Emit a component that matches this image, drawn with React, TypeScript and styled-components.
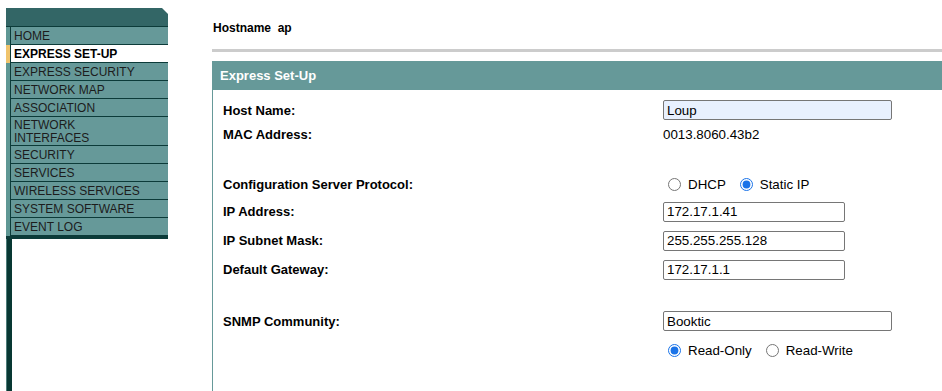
import React from 'react';
import styled, { createGlobalStyle, css } from 'styled-components';

const GlobalStyle = createGlobalStyle`
    html, body, #root {
        height: 100%;
        margin: 0;
    }
    body {
        font-family: 'Liberation Sans', Arial, sans-serif;
        background: #ffffff;
        color: #000000;
    }
`;

const Page = styled.div`
    display: flex;
    flex-direction: row;
    align-items: stretch;
    min-height: 100%;
    padding: 8px 0 0 6px;
    box-sizing: border-box;
    gap: 44px;
`;

const Sidebar = styled.nav`
    display: flex;
    flex-direction: column;
    width: 162px;
    flex-shrink: 0;
`;

const SidebarHead = styled.div`
    height: 18px;
    background-color: #336666;
    border-bottom: 1px solid #0c3b39;
    clip-path: polygon(0 0, calc(100% - 6px) 0, 100% 6px, 100% 100%, 0 100%);
`;

const MenuList = styled.ul`
    list-style: none;
    margin: 0;
    padding: 0;
`;

const MenuItem = styled.li<{ $active?: boolean }>`
    display: flex;
    flex-direction: row;
    background-color: #669999;
    &::before {
        content: '';
        width: 4px;
        flex-shrink: 0;
        background-color: ${({ $active }) => ($active ? '#f0c46c' : '#5f9794')};
        border-right: 1px solid #0c3b39;
    }
`;

const MenuLabel = styled.span<{ $active?: boolean; $tall?: boolean }>`
    flex: 1;
    display: flex;
    align-items: center;
    height: ${({ $tall }) => ($tall ? '27px' : '16px')};
    padding: 1px 0 0 3px;
    border-bottom: 1px solid #0c3b39;
    font-size: 12px;
    line-height: 13px;
    color: #1c1c1c;
    text-transform: uppercase;
    white-space: nowrap;
    ${({ $active }) =>
        $active &&
        css`
            background-color: #ffffff;
            color: #000000;
            font-weight: bold;
        `}
`;

const SidebarFoot = styled.div`
    height: 3px;
    background-color: #0c3b39;
`;

const SidebarTail = styled.div`
    flex: 1;
    width: 6px;
    background-color: #083833;
    border-left: 1px solid #4e7d7a;
    box-sizing: border-box;
`;

const Main = styled.main`
    flex: 1;
    display: flex;
    flex-direction: column;
    min-width: 0;
`;

const HostLine = styled.div`
    height: 40px;
    display: flex;
    align-items: center;
    padding: 0 0 0 1px;
    font-size: 12px;
    font-weight: bold;
    white-space: pre;
`;

const Rule = styled.hr`
    margin: 1px 0 9px;
    height: 3px;
    border: none;
    background-color: #cccccc;
`;

const PanelHeader = styled.div`
    height: 29px;
    display: flex;
    align-items: center;
    padding-left: 8px;
    background-color: #669999;
    color: #ffffff;
    font-size: 13px;
    font-weight: bold;
`;

const PanelBody = styled.div`
    flex: 1;
    border-left: 1px solid #669999;
    padding: 8px 0 0 10px;
    display: flex;
    flex-direction: column;
`;

const FormRow = styled.div<{ $h: number }>`
    display: grid;
    grid-template-columns: 440px 1fr;
    align-items: center;
    height: ${({ $h }) => $h}px;
`;

const Spacer = styled.div<{ $h: number }>`
    height: ${({ $h }) => $h}px;
`;

const Label = styled.span`
    font-size: 13px;
    font-weight: bold;
`;

const Value = styled.span`
    font-size: 13.33px;
`;

const TextInput = styled.input<{ $wide?: boolean; $filled?: boolean }>`
    box-sizing: border-box;
    width: ${({ $wide }) => ($wide ? '229px' : '182px')};
    height: 20px;
    padding: 0 3px;
    border: 1px solid #767676;
    border-radius: 2px;
    background-color: ${({ $filled }) => ($filled ? '#e8f0fe' : '#ffffff')};
    font-family: 'Liberation Sans', Arial, sans-serif;
    font-size: 13.33px;
    color: #000000;
    outline: none;
`;

const RadioGroup = styled.div`
    display: flex;
    flex-direction: row;
    align-items: center;
    gap: 9px;
`;

const RadioOption = styled.label`
    display: flex;
    align-items: center;
    font-size: 13.33px;
    input {
        width: 13px;
        height: 13px;
        margin: 0 7px 0 5px;
        accent-color: #1a73e8;
    }
`;

const menu = [
    'Home',
    'Express Set-Up',
    'Express Security',
    'Network Map',
    'Association',
    'Network Interfaces',
    'Security',
    'Services',
    'Wireless Services',
    'System Software',
    'Event Log',
];

const App = () => {
    return (
        <>
            <GlobalStyle />
            <Page>
                <Sidebar>
                    <SidebarHead />
                    <MenuList>
                        {menu.map((item) => {
                            const active = item === 'Express Set-Up';
                            const tall = item === 'Network Interfaces';
                            return (
                                <MenuItem key={item} $active={active}>
                                    <MenuLabel $active={active} $tall={tall}>
                                        {tall ? (
                                            <span>
                                                Network
                                                <br />
                                                Interfaces
                                            </span>
                                        ) : (
                                            item
                                        )}
                                    </MenuLabel>
                                </MenuItem>
                            );
                        })}
                    </MenuList>
                    <SidebarFoot />
                    <SidebarTail />
                </Sidebar>

                <Main>
                    <HostLine>{'Hostname  ap'}</HostLine>
                    <Rule />
                    <PanelHeader>Express Set-Up</PanelHeader>
                    <PanelBody>
                        <FormRow $h={24}>
                            <Label>Host Name:</Label>
                            <TextInput $wide $filled defaultValue="Loup" />
                        </FormRow>
                        <FormRow $h={24}>
                            <Label>MAC Address:</Label>
                            <Value>0013.8060.43b2</Value>
                        </FormRow>
                        <Spacer $h={25} />
                        <FormRow $h={26}>
                            <Label>Configuration Server Protocol:</Label>
                            <RadioGroup>
                                <RadioOption>
                                    <input type="radio" name="proto" />
                                    DHCP
                                </RadioOption>
                                <RadioOption>
                                    <input type="radio" name="proto" defaultChecked />
                                    Static IP
                                </RadioOption>
                            </RadioGroup>
                        </FormRow>
                        <FormRow $h={29}>
                            <Label>IP Address:</Label>
                            <TextInput defaultValue="172.17.1.41" />
                        </FormRow>
                        <FormRow $h={29}>
                            <Label>IP Subnet Mask:</Label>
                            <TextInput defaultValue="255.255.255.128" />
                        </FormRow>
                        <FormRow $h={29}>
                            <Label>Default Gateway:</Label>
                            <TextInput defaultValue="172.17.1.1" />
                        </FormRow>
                        <Spacer $h={22} />
                        <FormRow $h={30}>
                            <Label>SNMP Community:</Label>
                            <TextInput $wide defaultValue="Booktic" />
                        </FormRow>
                        <FormRow $h={29}>
                            <span />
                            <RadioGroup>
                                <RadioOption>
                                    <input type="radio" name="snmp" defaultChecked />
                                    Read-Only
                                </RadioOption>
                                <RadioOption>
                                    <input type="radio" name="snmp" />
                                    Read-Write
                                </RadioOption>
                            </RadioGroup>
                        </FormRow>
                    </PanelBody>
                </Main>
            </Page>
        </>
    );
};

export default App;
